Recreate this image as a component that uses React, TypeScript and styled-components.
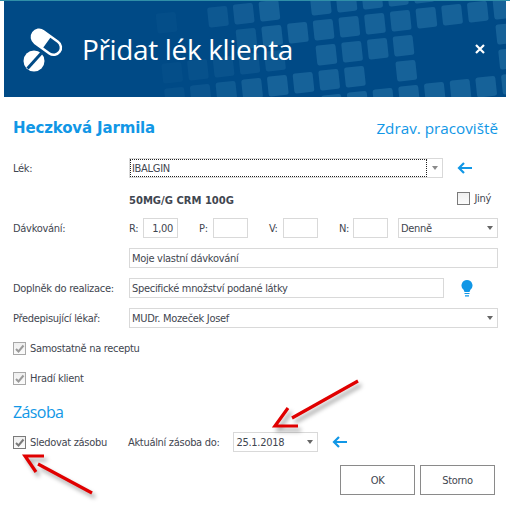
import React from 'react';
import styled, { createGlobalStyle } from 'styled-components';

const GlobalStyle = createGlobalStyle`
  html, body {
    margin: 0;
    padding: 0;
    background: #fff;
  }
  * {
    box-sizing: border-box;
  }
`;

const BLUE = '#1197e6';
const TEXT = '#3f4650';

const Page = styled.div`
  position: relative;
  width: 510px;
  height: 507px;
  overflow: hidden;
  background: #fff;
  border-top: 1px solid #2f8fa8;
  font-family: 'DejaVu Sans Condensed', 'DejaVu Sans', sans-serif;
  font-stretch: condensed;
  font-size: 11px;
  letter-spacing: -0.3px;
  color: ${TEXT};
`;

const Header = styled.header`
  position: relative;
  display: flex;
  align-items: center;
  height: 96px;
  margin: 0 4px;
  padding: 0 21px 0 16px;
  background: #004a86;
  color: #fff;
  overflow: hidden;
`;

const TileLayer = styled.svg`
  position: absolute;
  left: 0;
  top: 0;
`;

const HeaderIcon = styled.svg`
  position: relative;
  flex: none;
`;

const HeaderTitle = styled.h1`
  position: relative;
  margin: 0 0 0 14px;
  font-family: 'Open Sans', sans-serif;
  font-stretch: normal;
  font-size: 28px;
  font-weight: 400;
  letter-spacing: -0.35px;
  line-height: 36px;
  white-space: nowrap;
`;

const CloseButton = styled.svg`
  position: relative;
  margin-left: auto;
  flex: none;
`;

const Form = styled.div`
  display: flex;
  flex-direction: column;
  gap: 10px;
  padding: 0 12px 0 13px;
`;

const NameRow = styled.div`
  display: flex;
  align-items: center;
  justify-content: space-between;
  height: 22px;
  margin: 20px 0 9px;
  color: ${BLUE};
`;

const PatientName = styled.div`
  font-family: 'DejaVu Sans', sans-serif;
  font-stretch: normal;
  font-size: 15px;
  font-weight: 700;
  letter-spacing: -0.15px;
`;

const Workplace = styled.div`
  font-family: 'Open Sans', sans-serif;
  font-stretch: normal;
  font-size: 15.25px;
  letter-spacing: 0;
`;

const Row = styled.div`
  display: grid;
  grid-template-columns: 116px 1fr;
  align-items: center;
  height: 20px;
`;

const Label = styled.div`
  white-space: nowrap;
`;

const Controls = styled.div`
  display: flex;
  align-items: center;
  height: 20px;
`;

const Field = styled.div<{ $width?: number }>`
  position: relative;
  display: flex;
  align-items: center;
  flex: ${p => (p.$width ? 'none' : '1')};
  width: ${p => (p.$width ? `${p.$width}px` : 'auto')};
  height: 20px;
  padding: 0 2px;
  border: 1px solid #d9d9d9;
  background: #fff;
  white-space: nowrap;
`;

const FocusRing = styled.div`
  position: absolute;
  left: 0;
  top: 0;
  right: 15px;
  bottom: 0;
  border: 1px dotted #222;
`;

const Caret = styled.span<{ $light?: boolean }>`
  position: absolute;
  right: 4px;
  top: 7px;
  width: 0;
  height: 0;
  border-left: 3.5px solid transparent;
  border-right: 3.5px solid transparent;
  border-top: 4px solid ${p => (p.$light ? '#8a8a8a' : '#666')};
`;

const SideIcon = styled.svg<{ $left: number }>`
  flex: none;
  margin-left: ${p => p.$left}px;
`;

const BoldInfo = styled.div`
  flex: 1;
  padding-top: 4px;
  font-family: 'DejaVu Sans', sans-serif;
  font-stretch: normal;
  font-size: 10px;
  font-weight: 700;
  letter-spacing: 0;
`;

const Check = styled.label<{ $inset?: number }>`
  display: flex;
  align-items: center;
  gap: 4px;
  height: 20px;
  padding-right: ${p => p.$inset ?? 0}px;
  white-space: nowrap;
`;

const CheckBox = styled.span<{ $dark?: boolean }>`
  display: flex;
  align-items: center;
  justify-content: center;
  flex: none;
  width: 13px;
  height: 13px;
  border: 1px solid ${p => (p.$dark ? '#7a7a7a' : '#a8a8a8')};
  background: linear-gradient(#efefef, #fbfbfb);
`;

const DosePair = styled.div`
  display: flex;
  align-items: center;
  flex: none;
  width: 70px;
`;

const DoseLabel = styled.span`
  width: 14px;
  flex: none;
`;

const DoseInput = styled.div`
  display: flex;
  align-items: center;
  justify-content: flex-end;
  width: 35px;
  height: 20px;
  padding-right: 4px;
  border: 1px solid #d9d9d9;
`;

const PeriodSelect = styled(Field)`
  margin-left: -11px;
`;

const DateSelect = styled(Field)`
  padding-left: 3px;
`;

const SectionTitle = styled.div`
  height: 24px;
  line-height: 28px;
  font-family: 'Open Sans', sans-serif;
  font-stretch: normal;
  font-size: 16px;
  letter-spacing: -0.6px;
  color: ${BLUE};
`;

const StockRow = styled.div`
  display: flex;
  align-items: center;
  height: 20px;
`;

const StockLabel = styled.span`
  margin-left: 21px;
  margin-right: 13px;
  white-space: nowrap;
`;

const Actions = styled.div`
  display: flex;
  justify-content: flex-end;
  gap: 5px;
  margin-top: 3px;
  padding-right: 3px;
`;

const Button = styled.button`
  width: 75px;
  height: 30px;
  padding: 0;
  border: 1px solid #8a8a8a;
  background: #fff;
  font: inherit;
  letter-spacing: inherit;
  color: ${TEXT};
`;

const Annotation = styled.svg`
  position: absolute;
  left: 0;
  top: -1px;
  pointer-events: none;
  filter: drop-shadow(3px 4px 2px rgba(0, 0, 0, 0.35));
`;

// [column, row, opacity] in the slightly rotated tile grid of the banner
const tiles: [number, number, number][] = [
  [-7, -1, 0.2], [-5, -1, 0.6], [-4, -1, 0.8], [-3, -1, 1], [-1, -1, 1], [0, -1, 1], [1, -1, 1], [2, -1, 1], [3, -1, 1],
  [-4, 0, 0.7], [-3, 0, 1], [-2, 0, 1], [-1, 0, 1], [0, 0, 1], [1, 0, 1], [2, 0, 1], [3, 0, 1], [4, 0, 1], [5, 0, 1], [6, 0, 1],
  [-7, 1, 0.2], [-6, 1, 0.3], [-5, 1, 0.4], [-4, 1, 0.5], [-3, 1, 0.6], [-1, 1, 1], [0, 1, 1], [1, 1, 1], [2, 1, 1], [6, 1, 1],
  [-7, 2, 0.3], [-6, 2, 0.5], [-5, 2, 0.7], [-4, 2, 0.9], [-3, 2, 1], [-2, 2, 1], [-1, 2, 1], [0, 2, 1], [2, 2, 1], [6, 2, 1],
  [-1, 3, 1], [0, 3, 1], [1, 3, 1], [2, 3, 1], [3, 3, 1], [4, 3, 1], [5, 3, 1], [6, 3, 1],
];

const Tiles = () => (
  <TileLayer width="502" height="96" viewBox="0 0 502 96">
    {tiles.map(([c, r, o]) => {
      const x = 335.3 + c * 25.7 + r * 2.8;
      const y = 15.7 - c * 3 + r * 25;
      return (
        <rect
          key={`${c}:${r}`}
          x={x}
          y={y}
          width="20"
          height="20"
          rx="2.5"
          fill="#1a669c"
          opacity={o * 0.85}
          transform={`rotate(-6 ${x + 10} ${y + 10})`}
        />
      );
    })}
  </TileLayer>
);

const PillIcon = () => (
  <HeaderIcon width="48" height="48" viewBox="0 0 48 48">
    <g transform="rotate(36 26 17)">
      <rect x="9" y="8.5" width="35" height="17" rx="8.5" fill="#fff" />
      <path d="M27 11h8.5a6 6 0 0 1 0 12H27z" fill="#004a86" />
    </g>
    <circle cx="14" cy="36" r="10.5" fill="#fff" />
    <path d="M7.5 43.5L21.5 28" stroke="#004a86" strokeWidth="3" />
  </HeaderIcon>
);

const Close = () => (
  <CloseButton width="10" height="10" viewBox="0 0 10 10">
    <path d="M1 1l8 8M9 1l-8 8" stroke="#fff" strokeWidth="2.2" />
  </CloseButton>
);

const Arrow = () => (
  <SideIcon $left={14} width="15" height="12" viewBox="0 0 15 12">
    <path d="M15 6H2M7 1L2 6l5 5" fill="none" stroke={BLUE} strokeWidth="2.2" />
  </SideIcon>
);

const Tick = ({ color }: { color: string }) => (
  <svg width="11" height="11" viewBox="0 0 11 11">
    <path d="M2 6l2.5 2.5L9.5 2.5" fill="none" stroke={color} strokeWidth="2" />
  </svg>
);

const Bulb = () => (
  <SideIcon $left={17} width="12" height="17" viewBox="0 0 12 17">
    <path d="M6 0a5.5 5.5 0 0 1 3.4 9.8L8.5 12h-5l-.9-2.2A5.5 5.5 0 0 1 6 0z" fill={BLUE} />
    <path d="M3.5 13.5h5M4 15.8h4" stroke={BLUE} strokeWidth="1.2" />
  </SideIcon>
);

const RedArrows = () => (
  <Annotation width="510" height="507" viewBox="0 0 510 507">
    <g fill="none" stroke="#e00000" strokeWidth="3.2">
      <path d="M358 381L292 418" />
      <path d="M288 408L275 426H298" />
      <path d="M38 464L92 493" />
      <path d="M44 456H25L36 472" />
    </g>
  </Annotation>
);

export default function App() {
  return (
    <Page>
      <GlobalStyle />
      <Header>
        <Tiles />
        <PillIcon />
        <HeaderTitle>Přidat lék klienta</HeaderTitle>
        <Close />
      </Header>
      <Form>
        <NameRow>
          <PatientName>Heczková Jarmila</PatientName>
          <Workplace>Zdrav. pracoviště</Workplace>
        </NameRow>
        <Row>
          <Label>Lék:</Label>
          <Controls>
            <Field $width={314}>
              <FocusRing />
              IBALGIN
              <Caret $light />
            </Field>
            <Arrow />
          </Controls>
        </Row>
        <Row>
          <span />
          <Controls>
            <BoldInfo>50MG/G CRM 100G</BoldInfo>
            <Check $inset={7}>
              <CheckBox $dark />
              Jiný
            </Check>
          </Controls>
        </Row>
        <Row>
          <Label>Dávkování:</Label>
          <Controls>
            <DosePair>
              <DoseLabel>R:</DoseLabel>
              <DoseInput>1,00</DoseInput>
            </DosePair>
            <DosePair>
              <DoseLabel>P:</DoseLabel>
              <DoseInput />
            </DosePair>
            <DosePair>
              <DoseLabel>V:</DoseLabel>
              <DoseInput />
            </DosePair>
            <DosePair>
              <DoseLabel>N:</DoseLabel>
              <DoseInput />
            </DosePair>
            <PeriodSelect>
              Denně
              <Caret />
            </PeriodSelect>
          </Controls>
        </Row>
        <Row>
          <span />
          <Field>Moje vlastní dávkování</Field>
        </Row>
        <Row>
          <Label>Doplněk do realizace:</Label>
          <Controls>
            <Field $width={315}>Specifické množství podané látky</Field>
            <Bulb />
          </Controls>
        </Row>
        <Row>
          <Label>Předepisující lékař:</Label>
          <Field>
            MUDr. Mozeček Josef
            <Caret />
          </Field>
        </Row>
        <Check>
          <CheckBox>
            <Tick color="#9a9a9a" />
          </CheckBox>
          Samostatně na receptu
        </Check>
        <Check>
          <CheckBox>
            <Tick color="#9a9a9a" />
          </CheckBox>
          Hradí klient
        </Check>
        <SectionTitle>Zásoba</SectionTitle>
        <StockRow>
          <Check>
            <CheckBox $dark>
              <Tick color="#7a7a7a" />
            </CheckBox>
            Sledovat zásobu
          </Check>
          <StockLabel>Aktuální zásoba do:</StockLabel>
          <DateSelect $width={85}>
            25.1.2018
            <Caret />
          </DateSelect>
          <Arrow />
        </StockRow>
        <Actions>
          <Button>OK</Button>
          <Button>Storno</Button>
        </Actions>
      </Form>
      <RedArrows />
    </Page>
  );
}
